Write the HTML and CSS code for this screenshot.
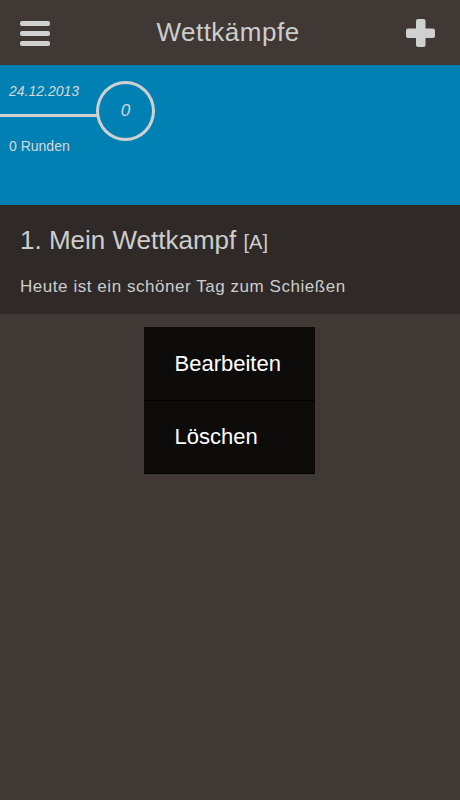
FILE: index.html
```html
<!DOCTYPE html>
<html>
<head>
<meta charset="utf-8">
<link rel="stylesheet" href="styles.css">
</head>
<body>
<header class="topbar">
  <svg class="icon menu-icon" width="30" height="25" viewBox="0 0 30 25">
    <rect x="0" y="0" width="30" height="5" rx="2" fill="#d0d0d0"/>
    <rect x="0" y="10" width="30" height="5" rx="2" fill="#d0d0d0"/>
    <rect x="0" y="20" width="30" height="5" rx="2" fill="#d0d0d0"/>
  </svg>
  <h1 class="title">Wettkämpfe</h1>
  <svg class="icon plus-icon" width="29" height="28" viewBox="0 0 29 28">
    <rect x="10" y="0" width="9.5" height="28" rx="2" fill="#d0d0d0"/>
    <rect x="0" y="9.5" width="29" height="9.5" rx="2" fill="#d0d0d0"/>
  </svg>
</header>
<section class="timeline">
  <div class="tl-left">
    <div class="date">24.12.2013</div>
    <div class="line"></div>
    <div class="rounds">0 Runden</div>
  </div>
  <div class="circle">0</div>
</section>
<section class="card">
  <h2 class="card-title">1. Mein Wettkampf <span class="tag">[A]</span></h2>
  <p class="card-desc">Heute ist ein schöner Tag zum Schießen</p>
</section>
<main class="content">
  <ul class="popup">
    <li class="popup-item">Bearbeiten</li>
    <li class="popup-item">Löschen</li>
  </ul>
</main>
</body>
</html>
```
FILE: styles.css
```css
* { box-sizing: border-box; }
html, body { margin: 0; padding: 0; }
body {
  width: 460px;
  height: 800px;
  background: #403834;
  font-family: "Liberation Sans", Arial, sans-serif;
  overflow: hidden;
}
.topbar {
  height: 65px;
  display: flex;
  align-items: center;
  justify-content: space-between;
  padding: 0 25px 0 20px;
  background: #403834;
}
.menu-icon { margin-top: 2px; }
.title {
  margin: 0;
  font-size: 26px;
  font-weight: normal;
  color: #cdcdcd;
  letter-spacing: 0.5px;
}
.timeline {
  height: 140px;
  background: #0080b3;
  display: flex;
  align-items: flex-start;
  padding-top: 16px;
}
.tl-left {
  width: 97px;
  display: flex;
  flex-direction: column;
}
.date {
  font-style: italic;
  font-size: 14px;
  color: #d8d8d8;
  padding-left: 9px;
  height: 18px;
  margin-top: 2px;
}
.line {
  height: 3px;
  background: #d0d0d0;
  margin-top: 13px;
}
.rounds {
  font-size: 14px;
  color: #d8d8d8;
  padding-left: 9px;
  margin-top: 21px;
}
.circle {
  width: 59px;
  height: 60px;
  border: 3px solid #d0d0d0;
  border-radius: 50%;
  display: flex;
  align-items: center;
  justify-content: center;
  font-style: italic;
  font-size: 17px;
  color: #d8d8d8;
  margin-left: -1px;
}
.card {
  background: #2f2a27;
  height: 109px;
  padding: 19px 20px 0;
}
.card-title {
  margin: 0;
  font-size: 26px;
  font-weight: normal;
  color: #cdcdcd;
  line-height: 32px;
}
.tag { font-size: 20px; }
.card-desc {
  margin: 19px 0 0;
  font-size: 17px;
  letter-spacing: 0.55px;
  color: #cdcdcd;
}
.content {
  padding-top: 13px;
  display: flex;
  justify-content: center;
}
.popup {
  list-style: none;
  margin: 0 0 0 -2px;
  padding: 0;
  width: 171px;
  background: #0e0c0b;
  border-bottom: 1px solid #000;
}
.popup-item {
  height: 73px;
  display: flex;
  align-items: center;
  padding-left: 31px;
  font-size: 22px;
  color: #ffffff;
}
.popup-item + .popup-item {
  border-top: 1px solid #000;
}
```
